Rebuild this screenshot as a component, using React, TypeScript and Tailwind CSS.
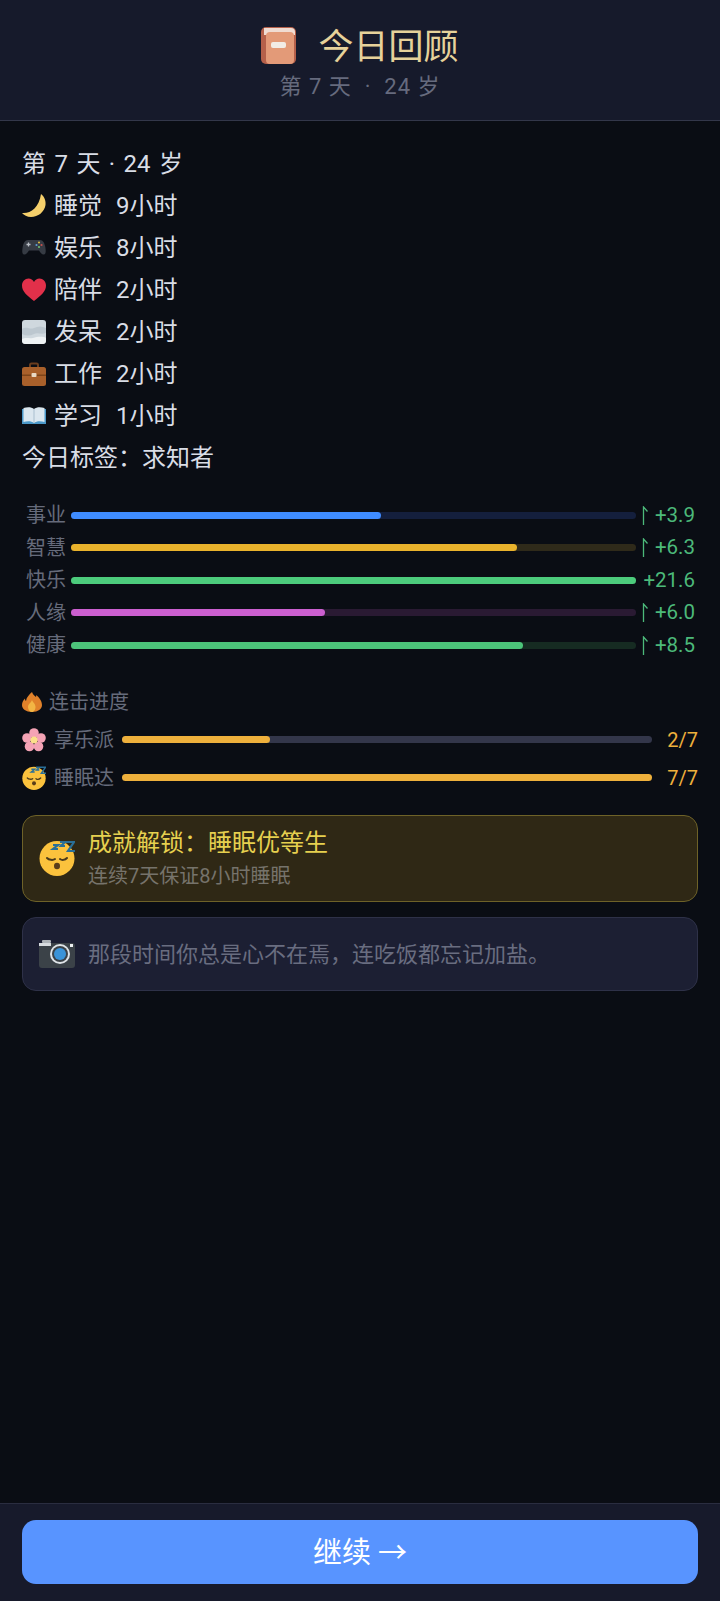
const stats = [
  { name: "事业", fill: "54.800%", bar: "bg-[#3f8cff]", track: "bg-[#141f3d]", value: "+3.9", up: true },
  { name: "智慧", fill: "79%", bar: "bg-[#e9b22c]", track: "bg-[#2f2a1a]", value: "+6.3", up: true },
  { name: "快乐", fill: "100%", bar: "bg-[#4ccb7c]", track: "bg-[#14291f]", value: "+21.6", up: false },
  { name: "人缘", fill: "45%", bar: "bg-[#cc5fd0]", track: "bg-[#2a1a33]", value: "+6.0", up: true },
  { name: "健康", fill: "80%", bar: "bg-[#4cc47a]", track: "bg-[#162b22]", value: "+8.5", up: true },
];

function BookIcon() {
  return (
    <svg width="35" height="37" viewBox="0 0 35 37">
      <rect x="0" y="0" width="35" height="37" rx="5" fill="#b5604a" />
      <path d="M3 1h27a4 4 0 0 1 4 4v3H3z" fill="#f0dcd2" />
      <rect x="5" y="5" width="28" height="32" rx="4" fill="#e39a78" />
      <rect x="10" y="15" width="15" height="6" rx="2" fill="#f2ece6" />
    </svg>
  );
}

function MoonIcon() {
  return (
    <svg width="24" height="24" viewBox="0 0 24 24">
      <path d="M19 0C23 3 24 8 23.500 11 22.500 18 16 23 9 23 5 23 2 21 0 19 8 20 17 14 19 0z" fill="#f5cf6b" />
    </svg>
  );
}

function GamepadIcon() {
  return (
    <svg width="24" height="24" viewBox="0 0 24 24">
      <path d="M6 4h12c3 0 4.500 3 5.300 7 .7 4 .7 7-1.300 7.500-2 .4-3.500-2-5-4H7c-1.500 2-3 4.400-5 4-2-.5-2-3.500-1.300-7.500C1.500 7 3 4 6 4z" fill="#363b44" />
      <path d="M4.500 8.500h4M6.500 6.500v4" stroke="#b9bec6" strokeWidth="1.300" />
      <circle cx="17" cy="6.500" r="1.100" fill="#d9b83e" />
      <circle cx="19.500" cy="9" r="1.100" fill="#c9504c" />
      <circle cx="14.500" cy="9" r="1.100" fill="#5b9bd5" />
      <circle cx="17" cy="11" r="1.100" fill="#6fbf73" />
    </svg>
  );
}

function HeartIcon() {
  return (
    <svg width="24" height="24" viewBox="0 0 24 24">
      <path d="M12 23C5 17.500 0 13.500 0 7.500 0 3.500 3 .5 6.500.5 8.900.5 10.900 1.800 12 4 13.100 1.800 15.100.5 17.500.5 21 .5 24 3.500 24 7.500 24 13.500 19 17.500 12 23z" fill="#e2304a" />
    </svg>
  );
}

function FogIcon() {
  return (
    <svg width="24" height="24" viewBox="0 0 24 24">
      <rect x="0" y="0" width="24" height="24" rx="3" fill="#cfd8de" />
      <path d="M0 9c5-3 8 1 12-1s8-2 12 0v5c-5 2-8-1-12 1s-8 2-12 0z" fill="#bcc7cf" />
      <path d="M0 19c4-2 7 0 11-1s9-2 13 0v2a4 4 0 0 1-4 4H4a4 4 0 0 1-4-4z" fill="#eef2f4" />
    </svg>
  );
}

function BriefcaseIcon() {
  return (
    <svg width="24" height="24" viewBox="0 0 24 24">
      <path d="M8 6V3A1.500 1.500 0 0 1 9.500 1.500h5A1.500 1.500 0 0 1 16 3V6" fill="none" stroke="#6b3d1e" strokeWidth="2" />
      <rect x="0" y="5" width="24" height="19" rx="2.500" fill="#a9602b" />
      <rect x="0" y="12.500" width="24" height="1.500" fill="#7e4419" />
      <rect x="9.500" y="11" width="5" height="4" rx="1" fill="#e9d9c5" />
    </svg>
  );
}

function OpenBookIcon() {
  return (
    <svg width="24" height="24" viewBox="0 0 24 24">
      <path d="M0 5h24v15H0z" fill="#4b98c9" />
      <path d="M1.500 4c4-1 8-1 10.500 1 2.500-2 6.500-2 10.500-1v14c-4-1-8-1-10.500 1-2.500-2-6.500-2-10.500-1z" fill="#dbe7ef" />
      <path d="M12 5v14" stroke="#a9bfcf" strokeWidth="1" />
    </svg>
  );
}

function FireIcon() {
  return (
    <svg width="20" height="20" viewBox="0 0 20 20">
      <path d="M10 0c1 3 3 4 4 5 .3-1 .3-1.500.2-2 3 2.500 5.800 6 5.800 10 0 4-4 7-10 7S0 17 0 13c0-3 1.500-5 3-6.500 0 1 .3 2 1 2.500C4.500 5 7 3 10 0z" fill="#e0812a" />
      <path d="M10 8c.5 2 3.500 3.500 3.500 7 0 2.500-1.500 5-3.500 5s-4-2-4-5c0-3 3-4 4-7z" fill="#f2b544" />
    </svg>
  );
}

function BlossomIcon() {
  return (
    <svg width="24" height="24" viewBox="0 0 24 24">
      <g fill="#f4a3b5">
        <circle cx="12" cy="5" r="4.800" />
        <circle cx="19" cy="10" r="4.800" />
        <circle cx="16.500" cy="18.500" r="4.800" />
        <circle cx="7.500" cy="18.500" r="4.800" />
        <circle cx="5" cy="10" r="4.800" />
      </g>
      <circle cx="12" cy="12" r="3.500" fill="#fbe08a" />
    </svg>
  );
}

function SleepIcon({ size }: { size: number }) {
  return (
    <svg width={size} height={size} viewBox="0 0 36 36">
      <circle cx="18" cy="18.500" r="17.500" fill="#fbc23d" />
      <path d="M8 18c2 2 6 2.500 8 1M21 19c2 1.500 5 1 7-1" fill="none" stroke="#4a3a1c" strokeWidth="2" strokeLinecap="round" />
      <ellipse cx="18" cy="26" rx="3" ry="3.200" fill="#5a3d1a" />
      <path d="M14 5h5l-5 4h5M21 2h5l-4 4h4M27 2h8l-6 9h7" fill="none" stroke="#2a6f97" strokeWidth="2.200" />
    </svg>
  );
}

function CameraIcon() {
  return (
    <svg width="36" height="28" viewBox="0 0 36 28">
      <rect x="3" y="0" width="9" height="3" rx="1" fill="#aeb3b8" />
      <rect x="0" y="3" width="36" height="25" rx="3" fill="#3b4248" />
      <rect x="0" y="3" width="12" height="3" fill="#d7dbdf" />
      <circle cx="21" cy="14" r="10" fill="#dfe4e8" />
      <circle cx="21" cy="14" r="8" fill="#3b4248" />
      <circle cx="21" cy="14" r="6" fill="#3a93d8" />
      <rect x="31" y="4" width="3" height="3" fill="#eceff1" />
    </svg>
  );
}

function UpArrow() {
  return (
    <svg width="7" height="19" viewBox="0 0 7 19" className="shrink-0">
      <path d="M1.500 19V1L5.500 5.500" fill="none" stroke="#4cb97a" strokeWidth="1.300" />
    </svg>
  );
}

function LogRow({ icon, label, hours }: { icon: React.ReactNode; label: string; hours: string }) {
  return (
    <div className="flex h-[42px] items-center">
      <span className="flex w-[32px] shrink-0 items-center">{icon}</span>
      <span className="w-[62px]">{label}</span>
      <span>{hours}</span>
    </div>
  );
}

export default function App() {
  return (
    <div className="flex h-[1601px] w-[720px] flex-col bg-[#0a0d14] text-[#d9dde6] [font-family:Roboto,'Noto_Sans_CJK_SC',sans-serif]">
      <header className="flex h-[121px] shrink-0 flex-col items-center border-b border-[#33374a] bg-[#161a2b] pt-[23px]">
        <div className="flex h-[44px] items-center gap-[22px]">
          <BookIcon />
          <span className="pt-[6px] text-[35px] leading-[44px] text-[#e6d29a]">今日回顾</span>
        </div>
        <div className="mt-[6px] text-[22px] leading-[28px] tracking-[1px] whitespace-pre text-[#666b7e]">
          第 7 天  ·  24 岁
        </div>
      </header>

      <main className="flex-1 px-[22px] pt-[22px]">
        <div className="text-[24px]">
          <div className="flex h-[42px] items-center whitespace-pre [word-spacing:2.500px]">第 7 天 · 24 岁</div>
          <LogRow icon={<MoonIcon />} label="睡觉" hours="9小时" />
          <LogRow icon={<GamepadIcon />} label="娱乐" hours="8小时" />
          <LogRow icon={<HeartIcon />} label="陪伴" hours="2小时" />
          <LogRow icon={<FogIcon />} label="发呆" hours="2小时" />
          <LogRow icon={<BriefcaseIcon />} label="工作" hours="2小时" />
          <LogRow icon={<OpenBookIcon />} label="学习" hours="1小时" />
          <div className="flex h-[42px] items-center">今日标签：求知者</div>
        </div>

        <div className="mt-[20px] flex flex-col">
          {stats.map((s) => (
            <div key={s.name} className="flex h-[32.500px] items-center">
              <span className="w-[49px] pl-[4px] text-[20px] text-[#666b7b]">{s.name}</span>
              <div className={`h-[7px] w-[565px] rounded-full ${s.track}`}>
                <div className={`h-full rounded-full ${s.bar}`} style={{ width: s.fill }} />
              </div>
              <span className="flex flex-1 items-center justify-end pr-[3px] text-[20.500px] text-[#4cb97a]">
                {s.up && <UpArrow />}
                <span className="ml-[6px]">{s.value}</span>
              </span>
            </div>
          ))}
        </div>

        <div className="mt-[25px] flex h-[30px] items-center gap-[7px] text-[20px] text-[#666b7b]">
          <FireIcon />
          <span>连击进度</span>
        </div>

        <div className="mt-[4px] flex h-[38px] items-center">
          <BlossomIcon />
          <span className="ml-[8px] w-[68px] text-[20px] text-[#666b7b]">享乐派</span>
          <div className="h-[7px] w-[530px] rounded-full bg-[#33364a]">
            <div className="h-full w-[28%] rounded-full bg-[#eeb03c]" />
          </div>
          <span className="flex-1 text-right text-[20px] text-[#eeb03c]">2/7</span>
        </div>
        <div className="flex h-[38px] items-center">
          <SleepIcon size={24} />
          <span className="ml-[8px] w-[68px] text-[20px] text-[#666b7b]">睡眠达</span>
          <div className="h-[7px] w-[530px] rounded-full bg-[#eeb03c]" />
          <span className="flex-1 text-right text-[20px] text-[#eeb03c]">7/7</span>
        </div>

        <div className="mt-[18px] flex h-[87px] items-center gap-[13px] rounded-[14px] border border-[#6e6228] bg-[#2f2815] px-[16px]">
          <SleepIcon size={36} />
          <div>
            <div className="text-[24px] leading-[32px] text-[#e6d04f]">成就解锁：睡眠优等生</div>
            <div className="mt-[3px] text-[20px] leading-[28px] text-[#76736b]">连续7天保证8小时睡眠</div>
          </div>
        </div>

        <div className="mt-[15px] flex h-[74px] items-center gap-[13px] rounded-[14px] border border-[#2e3148] bg-[#1c1f33] px-[16px]">
          <CameraIcon />
          <span className="pt-[2px] text-[22px] text-[#696d80]">那段时间你总是心不在焉，连吃饭都忘记加盐。</span>
        </div>
      </main>

      <footer className="h-[98px] shrink-0 border-t border-[#2a2d40] bg-[#171a2b] px-[22px] pt-[16px]">
        <button className="flex h-[64px] w-full items-center justify-center rounded-[14px] bg-[#5894ff] pt-[3px] text-[29px] text-white">
          继续 →
        </button>
      </footer>
    </div>
  );
}
